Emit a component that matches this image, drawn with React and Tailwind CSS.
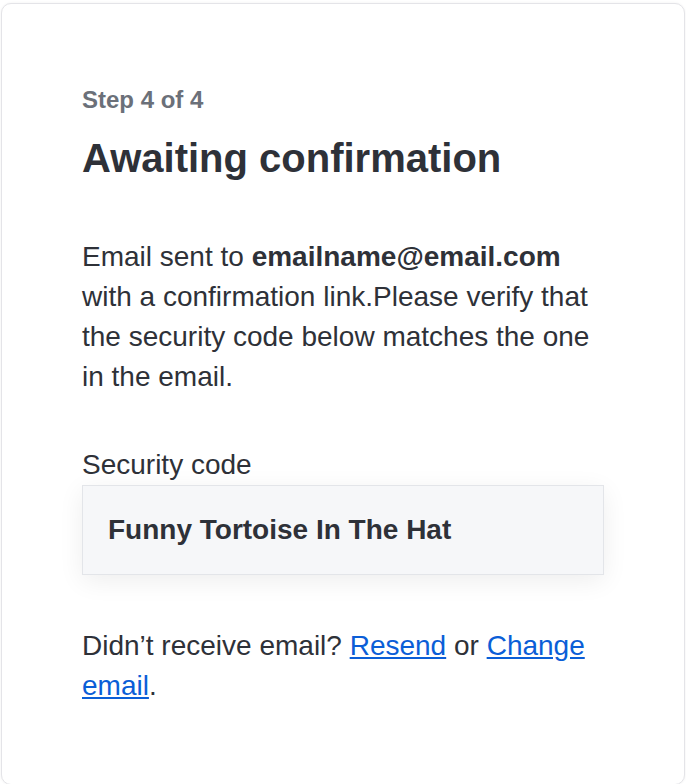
export default function App() {
  return (
    <div className="min-h-[784px] bg-white pl-[1px] pr-[1px] pt-[3px]" style={{ fontFamily: '"Liberation Sans", Arial, sans-serif' }}>
      <div className="min-h-[782px] rounded-[10px] border border-[#e4e4e8] bg-white px-[80px] pt-[80px] shadow-[0_0_3px_rgba(0,0,0,0.06)] text-[#2e3138]">
        <div className="text-[24px] font-bold leading-[32px] text-[#6b7079]">Step 4 of 4</div>
        <h1 className="mt-[18px] text-[40px] font-bold leading-[48px] text-[#2e3138]">Awaiting confirmation</h1>
        <p className="mt-[55px] text-[28px] leading-[40px]">
          Email sent to <span className="font-bold">emailname@email.com</span> with a confirmation link.Please verify that the security code below matches the one in the email.
        </p>
        <div className="mt-[48px] text-[28px] leading-[40px]">Security code</div>
        <div className="flex h-[90px] items-center border border-[#e3e5e9] bg-[#f6f7f9] pl-[25px] shadow-[0_6px_24px_rgba(0,0,0,0.07)]">
          <span className="text-[28px] font-bold">Funny Tortoise In The Hat</span>
        </div>
        <p className="mt-[51px] text-[28px] leading-[40px]">
          Didn’t receive email? <a href="#" className="text-[#0b5ed7] underline">Resend</a> or <a href="#" className="text-[#0b5ed7] underline">Change email</a>.
        </p>
      </div>
    </div>
  );
}
